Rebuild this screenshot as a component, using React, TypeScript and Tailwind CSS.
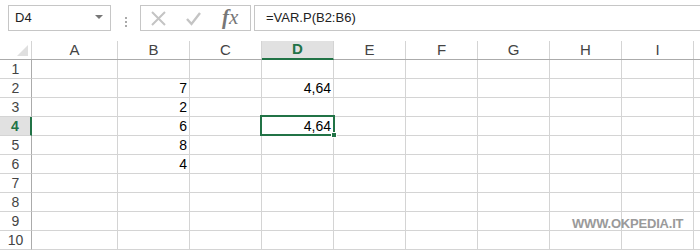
import React from "react";

const cols = [
  { label: "A", w: "w-[86px]" },
  { label: "B", w: "w-[72px]" },
  { label: "C", w: "w-[72px]" },
  { label: "D", w: "w-[72px]" },
  { label: "E", w: "w-[72px]" },
  { label: "F", w: "w-[72px]" },
  { label: "G", w: "w-[72px]" },
  { label: "H", w: "w-[72px]" },
  { label: "I", w: "w-[72px]" },
  { label: "", w: "w-[72px]" },
];

const data: Record<string, string> = {
  "2B": "7",
  "3B": "2",
  "4B": "6",
  "5B": "8",
  "6B": "4",
  "2D": "4,64",
  "4D": "4,64",
};

const rows = [1, 2, 3, 4, 5, 6, 7, 8, 9, 10];

export default function App() {
  return (
    <div className="w-[700px] h-[250px] overflow-hidden bg-white font-['Liberation_Sans',Arial,sans-serif] relative">
      {/* Formula bar */}
      <div className="h-[41px] flex pt-[5px] pl-[8px]">
        <div className="w-[103px] h-[26px] border border-[#c6c6c6] flex items-center justify-between pl-[6px] pr-[7px]">
          <span className="text-[13px] text-[#222]">D4</span>
          <span className="w-0 h-0 border-l-[4px] border-r-[4px] border-t-[4px] border-l-transparent border-r-transparent border-t-[#777] mb-[3px]" />
        </div>
        <div className="w-[29px] flex flex-col items-center justify-center gap-[2px] pb-[2px]">
          <span className="w-[2px] h-[2px] bg-[#aaa]" />
          <span className="w-[2px] h-[2px] bg-[#aaa]" />
          <span className="w-[2px] h-[2px] bg-[#aaa]" />
        </div>
        <div className="w-[111px] h-[26px] border border-[#c6c6c6] flex items-center pl-[9px]">
          <svg width="17" height="17" viewBox="0 0 17 17">
            <path d="M2 2 L15 15 M15 2 L2 15" stroke="#c4c4c4" strokeWidth="2" fill="none" />
          </svg>
          <svg width="17" height="17" viewBox="0 0 17 17" className="ml-[18px]">
            <path d="M2 9 L6.5 14 L15 3" stroke="#c4c4c4" strokeWidth="2.4" fill="none" />
          </svg>
          <span className="ml-[20px] font-['Liberation_Serif',serif] italic text-[#777] text-[21px] leading-none pb-[2px]">
            <span className="font-bold">f</span>x
          </span>
        </div>
        <div className="ml-[3px] flex-1 h-[26px] border border-r-0 border-[#c6c6c6] flex items-center pl-[11px]">
          <span className="text-[13px] text-[#222]">=VAR.P(B2:B6)</span>
        </div>
      </div>

      {/* Column headers */}
      <div className="flex h-[19px] border-b border-[#ababab]">
        <div className="w-[32px] shrink-0 border-r border-[#d4d4d4] flex items-end justify-end pr-[3px] pb-[3px]">
          <svg width="11" height="11" viewBox="0 0 11 11">
            <path d="M11 0 L11 11 L0 11 Z" fill="#dfdfdf" />
          </svg>
        </div>
        {cols.map((c, i) => (
          <div
            key={i}
            className={`${c.w} shrink-0 border-r flex items-center justify-center text-[15px] ${
              c.label === "D"
                ? "bg-[#e1e1e1] border-[#d4d4d4] text-[#217346] font-bold border-b-2 border-b-[#217346] -mb-[1px]"
                : "border-[#d4d4d4] text-[#444]"
            }`}
          >
            {c.label}
          </div>
        ))}
      </div>

      {/* Rows */}
      {rows.map((r) => (
        <div key={r} className="flex h-[19px]">
          <div
            className={`w-[32px] shrink-0 border-b flex items-center justify-center text-[14px] border-b-[#d4d4d4] ${
              r === 4
                ? "bg-[#e1e1e1] text-[#217346] font-bold border-r-2 border-r-[#217346]"
                : "border-r border-r-[#ababab] text-[#444]"
            }`}
          >
            {r}
          </div>
          {cols.map((c, i) => (
            <div
              key={i}
              className={`${c.w} shrink-0 border-r border-b border-[#d4d4d4] flex items-center justify-end pr-[2px] text-[14px] text-black leading-none`}
            >
              {data[`${r}${c.label}`] ?? ""}
            </div>
          ))}
        </div>
      ))}

      {/* Selected cell D4 */}
      <div className="absolute left-[260px] top-[115px] w-[75px] h-[21px] border-2 border-[#217346]" />
      <div className="absolute left-[331px] top-[132px] w-[6px] h-[6px] bg-[#217346] border border-white" />

      {/* Watermark */}
      <div className="absolute left-[572px] top-[214px] text-[13px] font-bold text-[#9a9a9a] tracking-[-0.2px]">
        WWW.OKPEDIA.IT
      </div>
    </div>
  );
}
